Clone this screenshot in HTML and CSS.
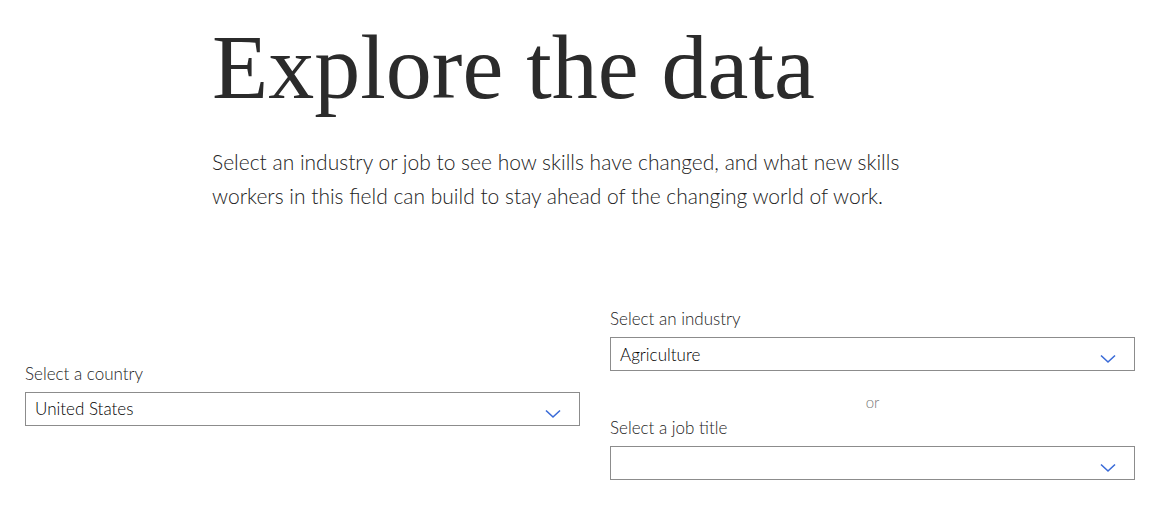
FILE: index.html
```html
<!DOCTYPE html>
<html lang="en">
<head>
  <meta charset="UTF-8" />
  <meta name="viewport" content="width=device-width, initial-scale=1.0"/>
  <title>Explore the data</title>
  <link rel="stylesheet" href="styles.css">
</head>
<body>
  <section class="intro">
    <h1>Explore the data</h1>
    <p>Select an industry or job to see how skills have changed, and what new skills workers in this field can build to stay ahead of the changing world of work.</p>
  </section>

  <div class="filters">
    <div class="col">
      <label>Select a country</label>
      <div class="select">
        <span>United States</span>
        <svg class="chev" width="16" height="10" viewBox="0 0 16 10"><path d="M1 1.5 L8 8 L15 1.5" fill="none" stroke="#3a6bd8" stroke-width="1.6"/></svg>
      </div>
    </div>

    <div class="col">
      <label>Select an industry</label>
      <div class="select">
        <span>Agriculture</span>
        <svg class="chev" width="16" height="10" viewBox="0 0 16 10"><path d="M1 1.5 L8 8 L15 1.5" fill="none" stroke="#3a6bd8" stroke-width="1.6"/></svg>
      </div>
      <div class="or">or</div>
      <label>Select a job title</label>
      <div class="select">
        <span></span>
        <svg class="chev" width="16" height="10" viewBox="0 0 16 10"><path d="M1 1.5 L8 8 L15 1.5" fill="none" stroke="#3a6bd8" stroke-width="1.6"/></svg>
      </div>
    </div>
  </div>
</body>
</html>
```

FILE: styles.css
```css
body {
  margin: 0;
  font-family: Lato, "Open Sans", sans-serif;
  color: #2b2b2b;
  background: #fff;
}
.intro {
  padding: 16px 0 0 212px;
}
.intro h1 {
  margin: 0;
  font-family: "Liberation Serif", serif;
  font-weight: normal;
  font-size: 92px;
  line-height: 102px;
  color: #2b2b2b;
}
.intro p {
  margin: 27px 0 0;
  width: 740px;
  font-size: 21px;
  font-weight: 300;
  line-height: 34px;
  color: #222;
}
.filters {
  display: grid;
  grid-template-columns: 555px 525px;
  column-gap: 30px;
  align-items: center;
  padding: 96px 0 0 25px;
}
.col label {
  display: block;
  font-size: 17px;
  font-weight: 300;
  line-height: 20px;
  margin-bottom: 8px;
  color: #222;
}
.select {
  display: flex;
  align-items: center;
  justify-content: space-between;
  height: 32px;
  border: 1px solid #8c8c8c;
  padding: 0 18px 0 9px;
  font-size: 17px;
  font-weight: 300;
  color: #000;
}
.select .chev {
  margin-top: 10px;
}
.or {
  text-align: center;
  font-size: 15px;
  font-weight: 300;
  color: #777;
  line-height: 20px;
  margin: 21px 0 6px;
}
```
